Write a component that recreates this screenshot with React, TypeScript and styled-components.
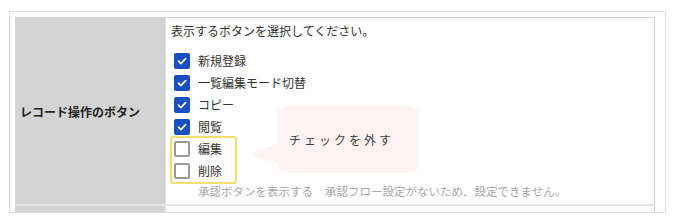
import styled, { createGlobalStyle } from "styled-components"

const GlobalStyle = createGlobalStyle`
    body {
        margin: 0;
        background: #fff;
        font-family: "Noto Sans CJK JP", "Noto Sans", sans-serif;
        color: #333;
    }
`

const Page = styled.div`
    width: 676px;
    height: 220px;
    padding: 11px 0 0 9px;
    box-sizing: border-box;
`

const Frame = styled.div`
    width: 657px;
    height: 202px;
    box-sizing: border-box;
    border: 1px solid #dcdcdc;
    padding: 5px 10px 0 5px;
    overflow: hidden;
`

const Table = styled.div`
    border: 1px solid #d4d4d4;
    background: #fff;
`

const Row = styled.div<{ $last?: boolean }>`
    display: grid;
    grid-template-columns: 150px 1fr;
    border-bottom: ${p => (p.$last ? "none" : "2px solid #e6e6e6")};
    min-height: ${p => (p.$last ? "40px" : "auto")};
`

const Label = styled.div`
    background: #d4d4d4;
    border-right: 1px solid #e4e4e4;
    display: flex;
    align-items: center;
    padding-left: 4px;
    font-size: 12px;
    font-weight: bold;
    color: #222;
`

const Content = styled.div`
    position: relative;
    padding: 4px 4px 4px 5px;
    font-size: 12px;
    line-height: 18px;
`

const Lead = styled.div`
    color: #333;
`

const List = styled.div`
    margin-top: 10px;
    padding-left: 3px;
    display: flex;
    flex-direction: column;
`

const Option = styled.label`
    display: flex;
    align-items: center;
    gap: 8px;
    height: 22px;
    color: #333;
`

const Box = styled.span<{ $checked: boolean }>`
    width: 16px;
    height: 16px;
    box-sizing: border-box;
    border-radius: 2px;
    display: flex;
    align-items: center;
    justify-content: center;
    background: ${p => (p.$checked ? "#1a4fc4" : "#fff")};
    border: 2px solid ${p => (p.$checked ? "#1a4fc4" : "#9a9a9a")};
`

const Highlight = styled.div`
    width: 67px;
    box-sizing: border-box;
    margin: -2px 0 -2px -4px;
    padding-left: 2px;
    border: 2px solid #f2e06c;
    border-radius: 3px;
`

const Note = styled.div`
    padding-left: 27px;
    color: #a8a8a8;
    font-size: 11.5px;
    white-space: nowrap;
`

const Gap = styled.span`
    margin-left: 12px;
`

const Bubble = styled.div`
    position: absolute;
    left: 111px;
    top: 88px;
    width: 142px;
    height: 67px;
    box-sizing: border-box;
    padding-left: 12px;
    border-radius: 10px;
    background: #fff3f3;
    display: flex;
    align-items: center;
    font-size: 12px;
    letter-spacing: 3px;
    color: #444;

    &::before {
        content: "";
        position: absolute;
        left: -28px;
        top: 37px;
        width: 29px;
        height: 22px;
        background: #fff3f3;
        clip-path: polygon(0 55%, 100% 0, 100% 100%);
    }
`

const Check = () => (
    <svg width="10" height="10" viewBox="0 0 10 10">
        <path d="M1.5 5.2 L4 7.5 L8.6 2.6" fill="none" stroke="#fff" strokeWidth="1.8" strokeLinecap="round" strokeLinejoin="round" />
    </svg>
)

const Item = ({ label, checked }: { label: string; checked: boolean }) => (
    <Option>
        <Box $checked={checked}>{checked && <Check />}</Box>
        {label}
    </Option>
)

const checkedItems = ["新規登録", "一覧編集モード切替", "コピー", "閲覧"]
const uncheckedItems = ["編集", "削除"]

const App = () => {
    return <Page>
        <GlobalStyle />
        <Frame>
            <Table>
                <Row>
                    <Label>レコード操作のボタン</Label>
                    <Content>
                        <Lead>表示するボタンを選択してください。</Lead>
                        <List>
                            {checkedItems.map(name => <Item key={name} label={name} checked />)}
                            <Highlight>
                                {uncheckedItems.map(name => <Item key={name} label={name} checked={false} />)}
                            </Highlight>
                        </List>
                        <Note>承認ボタンを表示する<Gap>承認フロー設定がないため、設定できません。</Gap></Note>
                        <Bubble>チェックを外す</Bubble>
                    </Content>
                </Row>
                <Row $last>
                    <Label />
                    <Content />
                </Row>
            </Table>
        </Frame>
    </Page>
}

export default App
